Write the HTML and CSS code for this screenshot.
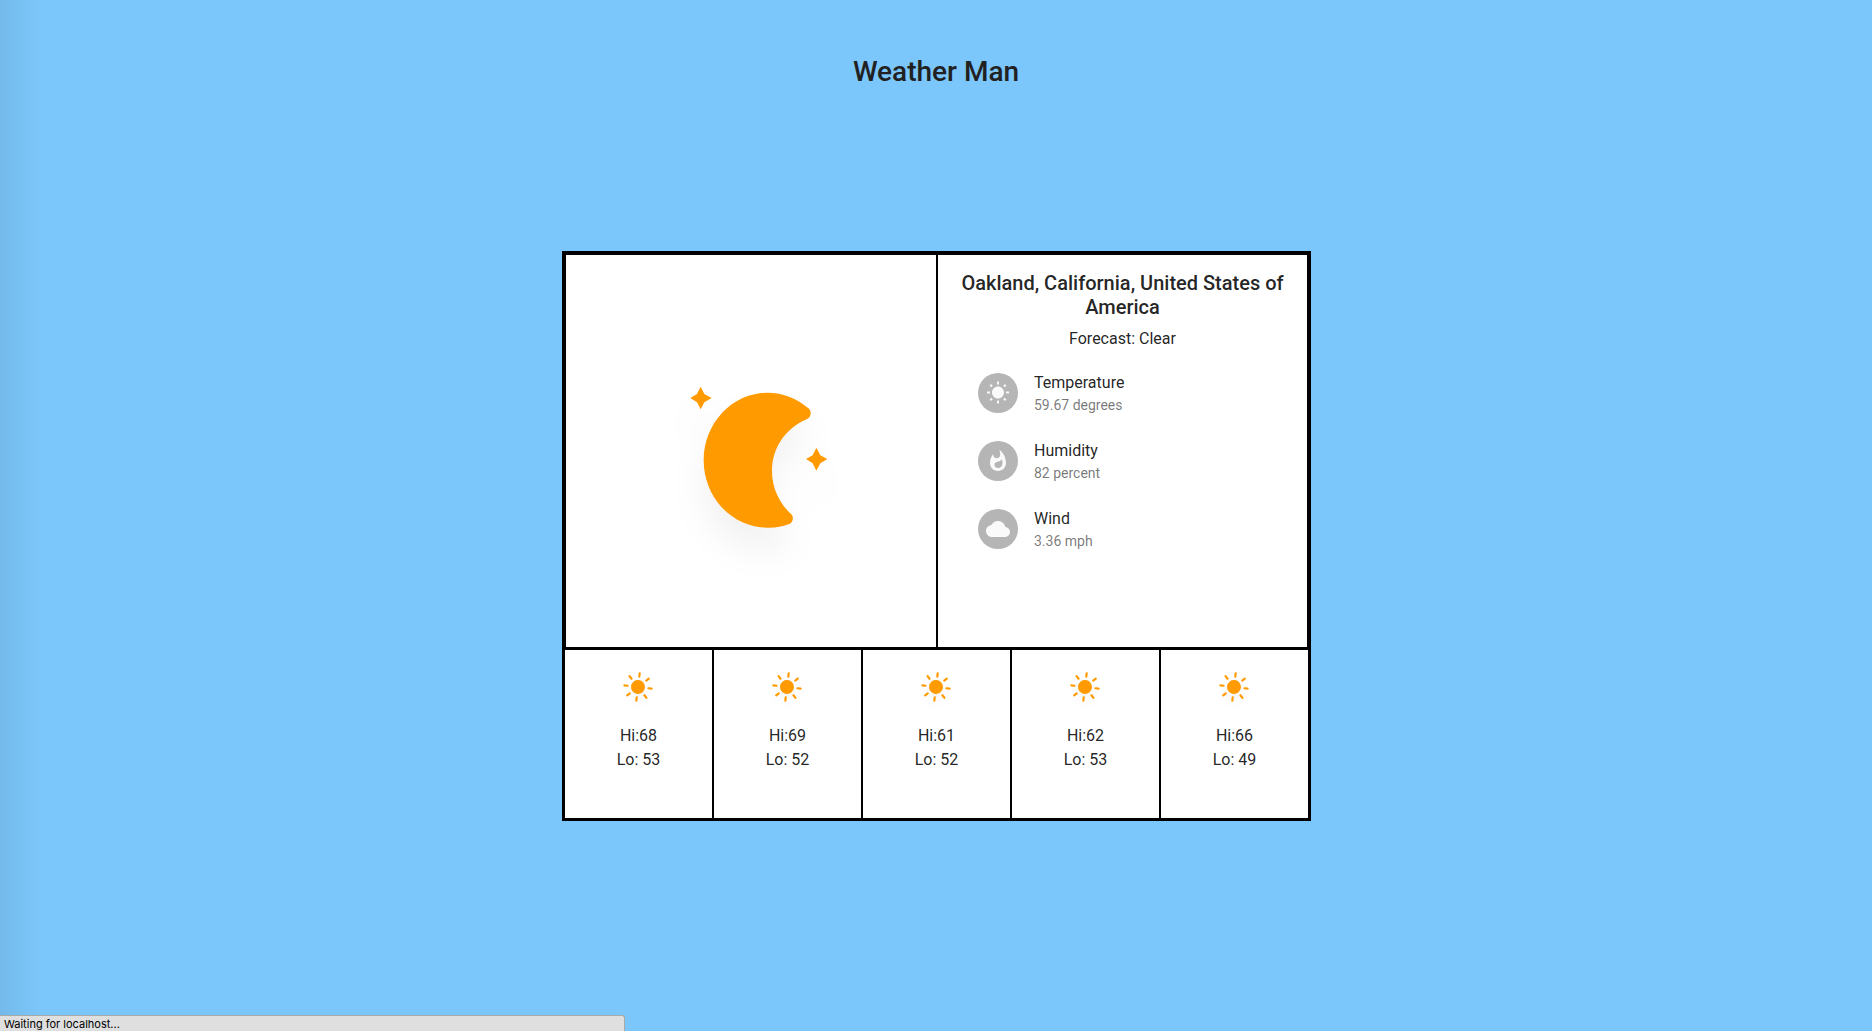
FILE: index.html
```html
<!DOCTYPE html>
<html lang="en">
<head>
<meta charset="utf-8">
<title>Weather Man</title>
<link rel="stylesheet" href="styles.css">
</head>
<body>
<svg class="defs" width="0" height="0" aria-hidden="true">
  <defs>
    <symbol id="sun" viewBox="-24 -24 48 48">
      <g transform="rotate(7)" stroke="#ff9b00" stroke-width="2.2" stroke-linecap="round">
        <circle r="7" fill="#ff9b00" stroke="none"/>
        <path d="M0-13.7V-10.5M0 13.7V10.5M-13.7 0H-10.5M13.7 0H10.5M-9.7-9.7L-7.4-7.4M9.7 9.7L7.4 7.4M-9.7 9.7L-7.4 7.4M9.7-9.7L7.4-7.4"/>
      </g>
    </symbol>
  </defs>
</svg>
<h1 class="title">Weather Man</h1>
<main class="card">
  <section class="current">
    <div class="picture">
      <svg class="moon" viewBox="0 0 600 690">
        <path d="M322 98C370 98 412 116 447 146C456 155 453 172 440 178C378 205 336 262 336 333C336 385 358 430 396 465C402 475 397 490 386 493C365 500 345 504 322 503C217 503 131 413 131 301C131 189 217 98 322 98Z"/>
        <path d="M122 80L133 102L155 114L133 127L122 148L111 127L91 114L111 102ZM469 263L481 286L502 297L481 310L469 332L458 310L438 297L458 286Z"/>
      </svg>
    </div>
    <div class="details">
      <h2 class="place">Oakland, California, United States of America</h2>
      <p class="forecast">Forecast: Clear</p>
      <ul class="stats">
        <li class="stat">
          <span class="avatar"><svg class="icon" viewBox="0 0 24 24"><path d="M6.76 4.84l-1.8-1.79-1.41 1.41 1.79 1.79 1.42-1.41zM4 10.5H1v2h3v-2zm9-9.95h-2V3.5h2V.55zm7.45 3.91l-1.41-1.41-1.79 1.79 1.41 1.41 1.79-1.79zm-3.21 13.7l1.79 1.8 1.41-1.41-1.8-1.79-1.4 1.4zM20 10.5v2h3v-2h-3zm-8-5c-3.31 0-6 2.69-6 6s2.69 6 6 6 6-2.69 6-6-2.69-6-6-6zm-1 16.95h2V19.5h-2v2.95zm-7.45-3.91l1.41 1.41 1.79-1.8-1.41-1.41-1.79 1.8z"/></svg></span>
          <div><div class="label">Temperature</div><div class="value">59.67 degrees</div></div>
        </li>
        <li class="stat">
          <span class="avatar"><svg class="icon" viewBox="0 0 24 24"><path d="M13.5.67s.74 2.65.74 4.8c0 2.06-1.35 3.73-3.41 3.73-2.07 0-3.63-1.67-3.63-3.73l.03-.36C5.21 7.51 4 10.62 4 14c0 4.42 3.58 8 8 8s8-3.58 8-8C20 8.61 17.41 3.8 13.5.67zM11.71 19c-1.78 0-3.22-1.4-3.22-3.14 0-1.62 1.05-2.76 2.81-3.12 1.77-.36 3.6-1.21 4.62-2.58.39 1.29.59 2.65.59 4.04 0 2.65-2.15 4.8-4.8 4.8z"/></svg></span>
          <div><div class="label">Humidity</div><div class="value">82 percent</div></div>
        </li>
        <li class="stat">
          <span class="avatar"><svg class="icon" viewBox="0 0 24 24"><path d="M19.35 10.04C18.67 6.59 15.64 4 12 4 9.11 4 6.6 5.64 5.35 8.04 2.34 8.36 0 10.91 0 14c0 3.31 2.69 6 6 6h13c2.76 0 5-2.24 5-5 0-2.64-2.05-4.78-4.65-4.96z"/></svg></span>
          <div><div class="label">Wind</div><div class="value">3.36 mph</div></div>
        </li>
      </ul>
    </div>
  </section>
  <section class="days">
    <div class="day"><svg class="sun"><use href="#sun"/></svg><div>Hi:68</div><div>Lo: 53</div></div>
    <div class="day"><svg class="sun"><use href="#sun"/></svg><div>Hi:69</div><div>Lo: 52</div></div>
    <div class="day"><svg class="sun"><use href="#sun"/></svg><div>Hi:61</div><div>Lo: 52</div></div>
    <div class="day"><svg class="sun"><use href="#sun"/></svg><div>Hi:62</div><div>Lo: 53</div></div>
    <div class="day"><svg class="sun"><use href="#sun"/></svg><div>Hi:66</div><div>Lo: 49</div></div>
  </section>
</main>
<div class="status">Waiting for localhost...</div>
</body>
</html>
```

FILE: styles.css
```css
* { box-sizing: border-box; }

body {
  margin: 0;
  height: 1031px;
  overflow: hidden;
  display: flex;
  flex-direction: column;
  align-items: center;
  font: 16px/24px Roboto, sans-serif;
  color: rgba(0, 0, 0, .87);
  background: linear-gradient(90deg, rgba(0, 0, 0, .06), transparent 40px) #7bc6fa;
}

.defs { position: absolute; }

.title {
  margin: 55px 0 162px;
  font-size: 28px;
  line-height: 34px;
  font-weight: 500;
  color: #212121;
}

.card {
  width: 749px;
  height: 570px;
  margin-left: 1px;
  background: #fff;
}

.current {
  display: grid;
  grid-template-columns: 372px 369px;
  height: 399px;
  border: 4px solid #000;
  border-bottom-width: 3px;
}

.picture {
  border-right: 2px solid #000;
  padding: 105px 0 0 94px;
}

.moon {
  display: block;
  width: 200px;
  height: 230px;
  overflow: visible;
  fill: #ff9b00;
  filter: drop-shadow(-2px 23px 16px rgba(0, 0, 0, .05));
}

.details { padding-top: 16px; }

.place {
  margin: 0 16px 8px;
  font-size: 20px;
  line-height: 24px;
  font-weight: 500;
  text-align: center;
}

.forecast { margin: 0 0 8px; text-align: center; }

.stats { list-style: none; margin: 0; padding: 0 40px; }

.stat {
  display: flex;
  align-items: center;
  gap: 16px;
  height: 68px;
}

.avatar {
  display: flex;
  align-items: center;
  justify-content: center;
  width: 40px;
  height: 40px;
  border-radius: 50%;
  background: #b5b5b5;
}

.icon { width: 24px; height: 24px; fill: #fafafa; }

.value { font-size: 14px; line-height: 20px; color: rgba(0, 0, 0, .54); }

.days {
  display: grid;
  grid-template-columns: repeat(4, 149px) 147px;
  height: 171px;
  border: solid #000;
  border-width: 0 3px 3px;
}

.day {
  display: flex;
  flex-direction: column;
  align-items: center;
  padding-top: 13px;
}

.day:not(:last-child) { border-right: 2px solid #000; }

.sun {
  width: 48px;
  height: 48px;
  margin: 0 1px 13px 0;
  filter: drop-shadow(0 5px 3px rgba(0, 0, 0, .04));
}

/* browser status bubble over the bottom-left corner */
.status {
  position: absolute;
  left: 0;
  bottom: 0;
  width: 625px;
  height: 16px;
  padding-left: 4px;
  border: solid #a9a9a9;
  border-width: 1px 1px 0 0;
  border-top-right-radius: 3px;
  background: #dfdfdf;
  color: #000;
  font: 11px/16px Inter, sans-serif;
}
```
